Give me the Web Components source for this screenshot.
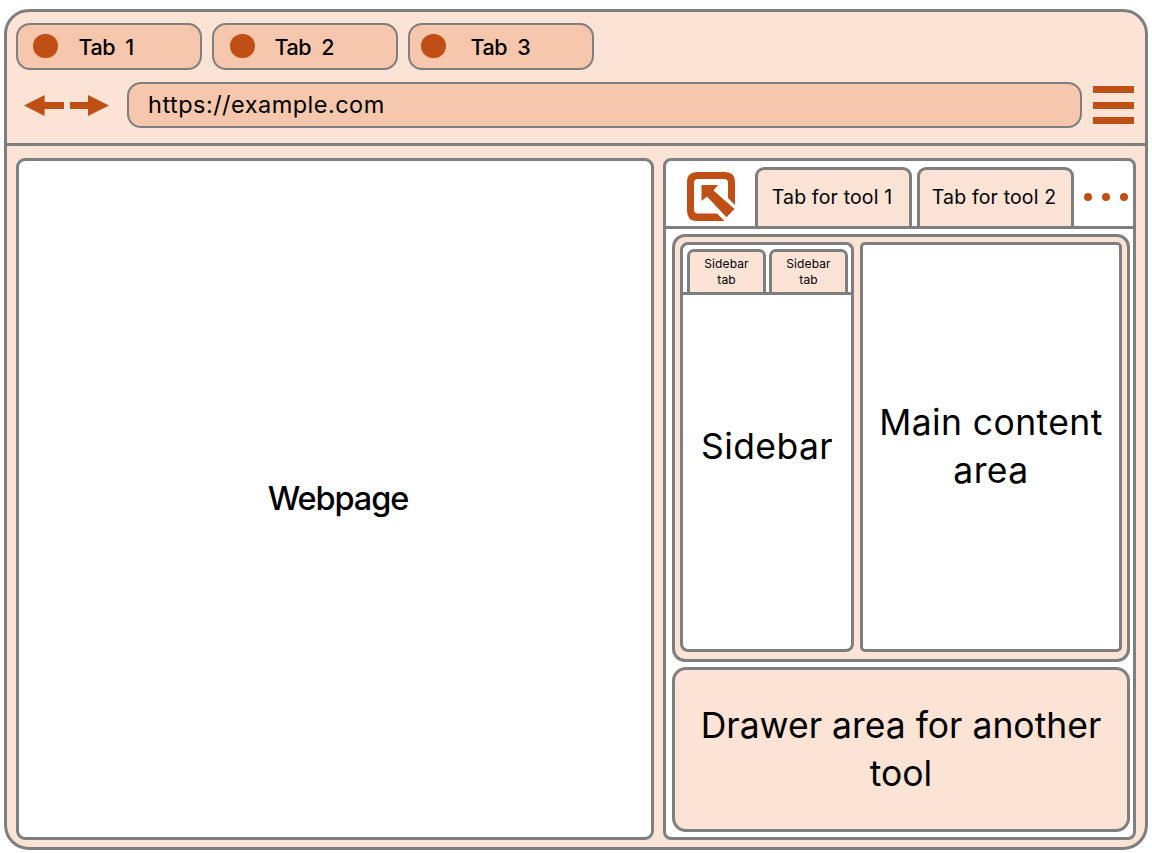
<!DOCTYPE html>
<html lang="en">
<head>
<meta charset="utf-8">
<title>Browser with developer tools</title>
<style>
  html, body { margin: 0; background: #fff; }
  body {
    --line: #7f7f7f; --pale: #fbe3d6; --peach: #f6c6ad; --rust: #c04f15;
    width: 1152px; height: 853px; overflow: hidden; box-sizing: border-box;
    padding: 9px 4px 3px; color: #000;
    font-family: Inter, "Liberation Sans", sans-serif;
  }
</style>
</head>
<body>
<browser-window></browser-window>
<script>
const define = (name, html) => {
  const template = document.createElement('template');
  template.innerHTML = '<style>*,:host{box-sizing:border-box}svg{display:block}</style>' + html;
  customElements.define(name, class extends HTMLElement {
    constructor() {
      super();
      this.attachShadow({ mode: 'open' }).append(template.content.cloneNode(true));
    }
  });
};

define('text-label', `
<style>
  :host { display: block; white-space: nowrap; text-align: center; font-size: var(--size, 35.5px); line-height: var(--lead, 48px); letter-spacing: var(--track, 0); }
</style><slot></slot>`);

define('browser-tab', `
<style>
  :host { display: flex; align-items: center; width: 186px; height: 47px; border: 2px solid var(--line); border-radius: 14px; background: var(--peach); padding-left: var(--inset, 16px); }
  i { width: 24.5px; height: 24.5px; border-radius: 50%; background: var(--rust); margin: 0 var(--gap, 20px) 1px 0; }
  span { font-size: 21.5px; font-weight: 500; line-height: 30px; white-space: pre; letter-spacing: -.4px; padding-top: 1px; word-spacing: -.3px; }
</style><i></i><span><slot></slot></span>`);

define('nav-arrows', `
<style>:host { display: block; width: 85px; height: 21px; }</style>
<svg width="85" height="21" viewBox="0 0 85 21" fill="var(--rust)">
  <path d="M0 10.5 20.6 0V7H40v7H20.6v7Z"/><path d="M46 7H64V0L85 10.5 64 21V14H46Z"/>
</svg>`);

define('address-bar', `
<style>
  :host { display: flex; align-items: center; width: 955px; height: 46px; border: 2px solid var(--line); border-radius: 14px; background: var(--peach); padding: 0 0 1px 19px; font-size: 23.5px; letter-spacing: .48px; }
</style><slot></slot>`);

define('menu-button', `
<style>
  :host { display: flex; flex-direction: column; justify-content: space-between; width: 41px; height: 38px; }
  i { height: 7px; background: var(--rust); }
</style><i></i><i></i><i></i>`);

define('browser-header', `
<style>
  :host { display: block; height: 134px; padding: 11px 0 0 9px; border-bottom: 3px solid var(--line); }
  .tabs { display: flex; gap: 10px; }
  .bar { display: flex; align-items: center; margin-top: 12px; padding-left: 8px; }
  address-bar { margin: 0 11px 0 18px; }
</style>
<div class="tabs">
  <browser-tab style="--inset:15px;--gap:21px">Tab&nbsp; 1</browser-tab>
  <browser-tab>Tab&nbsp; 2</browser-tab>
  <browser-tab style="--inset:11px;--gap:25px">Tab&nbsp; 3</browser-tab>
</div>
<div class="bar">
  <nav-arrows></nav-arrows>
  <address-bar>https://example.com</address-bar>
  <menu-button></menu-button>
</div>`);

define('page-view', `
<style>
  :host { display: grid; place-items: center; width: 638px; height: 682px; padding-left: 6px; border: 3px solid var(--line); border-radius: 9px; background: #fff; }
  text-label { --size: 32.5px; --track: -1.1px; font-weight: 500; }
</style><text-label><slot></slot></text-label>`);

define('inspect-icon', `
<style>:host { display: block; width: 48px; height: 49px; }</style>
<svg width="48" height="49" viewBox="0 0 48 49" fill="var(--rust)">
  <path d="M41 26V11Q41 7 37 7H11Q7 7 7 11V37.500Q7 41.500 11 41.500H30L37.500 49H10Q0 49 0 39V10Q0 0 10 0H38Q48 0 48 10V33Z"/>
  <path d="M14.500 13H31L26.500 18.500 47.500 37 39.500 45.300 20 24.500 14.500 29Z"/>
</svg>`);

define('tool-tab', `
<style>
  :host { display: block; width: 157px; height: 59px; padding-top: 15px; border: 3px solid var(--line); border-bottom: 0; border-radius: 9px 9px 0 0; background: var(--pale); }
  text-label { --size: 19.5px; --lead: 24px; --track: .15px; margin: 0 -8px 0 -11px; }
</style><text-label><slot></slot></text-label>`);

define('more-dots', `
<style>
  :host { display: flex; gap: 10px; }
  i { width: 8px; height: 8px; border-radius: 50%; background: var(--rust); }
</style><i></i><i></i><i></i>`);

define('tool-bar', `
<style>
  :host { display: flex; align-items: flex-end; height: 68px; border-bottom: 3px solid var(--line); padding-left: 21px; }
  inspect-icon { margin: 0 20px 5px 0; }
  tool-tab + tool-tab { margin-left: 5px; }
  more-dots { margin: 0 0 25px 10px; }
</style>
<inspect-icon></inspect-icon>
<tool-tab>Tab for tool 1</tool-tab><tool-tab>Tab for tool 2</tool-tab>
<more-dots></more-dots>`);

define('sidebar-tab', `
<style>
  :host { display: block; width: 79px; height: 43px; padding-top: 4px; border: 3px solid var(--line); border-bottom: 0; border-radius: 7px 7px 0 0; background: var(--pale); }
  text-label { --size: 12px; --lead: 16px; --track: .1px; }
</style><text-label><slot></slot></text-label>`);

define('tool-sidebar', `
<style>
  :host { display: flex; flex-direction: column; width: 174px; height: 410px; border: 3px solid var(--line); border-radius: 8px; background: #fff; }
  .tabs { display: flex; align-items: flex-end; gap: 3px; height: 50px; padding-left: 4px; border-bottom: 3px solid var(--line); }
  .body { flex: 1; display: grid; place-items: center; padding-bottom: 50px; }
  .body text-label { --track: .4px; }
</style>
<div class="tabs"><sidebar-tab>Sidebar<br>tab</sidebar-tab><sidebar-tab>Sidebar<br>tab</sidebar-tab></div>
<div class="body"><text-label><slot></slot></text-label></div>`);

define('main-content', `
<style>
  :host { display: grid; place-items: center; width: 262px; height: 410px; border: 3px solid var(--line); border-radius: 5px; background: #fff; }
  text-label { --track: .4px; }
</style><text-label><slot></slot></text-label>`);

define('tool-panel', `
<style>
  :host { display: flex; gap: 6px; width: 458px; height: 428px; padding: 5px; border: 3px solid var(--line); border-radius: 13px; background: var(--pale); }
</style><slot></slot>`);

define('tool-drawer', `
<style>
  :host { display: grid; place-items: center; width: 458px; height: 165px; border: 3px solid var(--line); border-radius: 14px; background: var(--pale); }
</style><text-label><slot></slot></text-label>`);

define('dev-tools', `
<style>
  :host { display: block; width: 473px; height: 682px; border: 3px solid var(--line); border-radius: 8px; background: #fff; }
  .stack { display: flex; flex-direction: column; gap: 5px; padding: 5px 0 0 6px; }
</style>
<tool-bar></tool-bar>
<div class="stack">
  <tool-panel><tool-sidebar>Sidebar</tool-sidebar><main-content>Main content<br>area</main-content></tool-panel>
  <tool-drawer>Drawer area for another<br>tool</tool-drawer>
</div>`);

define('browser-window', `
<style>
  :host { display: block; width: 1144px; height: 841px; border: 3px solid var(--line); border-radius: 25px; background: var(--pale); }
  .content { display: flex; gap: 9px; padding: 12px 0 0 9px; }
</style>
<browser-header></browser-header>
<div class="content"><page-view>Webpage</page-view><dev-tools></dev-tools></div>`);
</script>
</body>
</html>
